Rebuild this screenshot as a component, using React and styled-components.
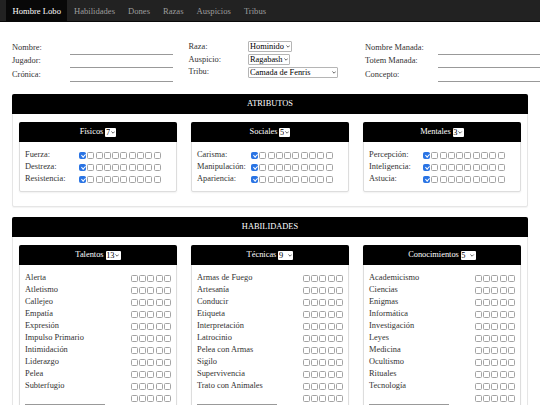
import React from 'react';
import styled, { createGlobalStyle } from 'styled-components';

const Global = createGlobalStyle`
  html, body { margin: 0; padding: 0; overflow: hidden; background: #fff; }
  body {
    font-family: "Liberation Serif", "Times New Roman", serif;
    font-size: 8.4px;
    line-height: 12px;
    color: #333;
  }
  * { box-sizing: border-box; }
`;

const Nav = styled.nav`
  height: 22px;
  background: #222;
  border-bottom: 1px solid #080808;
  display: flex;
  padding-left: 6px;
`;

const NavItem = styled.a`
  display: flex;
  align-items: center;
  padding: 0 6.5px;
  color: ${p => (p.$active ? '#fff' : '#9d9d9d')};
  background: ${p => (p.$active ? '#080808' : 'transparent')};
  text-decoration: none;
  font-size: 8.6px;
`;

const Form = styled.div`
  display: grid;
  grid-template-columns: 176.5px 176.5px 176.5px;
  padding: 19px 0 0 12px;
  width: 560px;
`;

const FieldCol = styled.div`
  display: grid;
  grid-template-columns: ${p => p.$label}px ${p => p.$field};
  align-content: start;
  align-items: center;
`;

const Label = styled.label`
  white-space: nowrap;
  color: #333;
`;

const LineInput = styled.input`
  height: 13.5px;
  width: 100%;
  border: none;
  border-bottom: 1px solid #999;
  outline: none;
  background: transparent;
  padding: 0;
  font: inherit;
`;

const SelWrap = styled.span`
  position: relative;
  display: inline-flex;
  margin-bottom: ${p => p.$mb || 0}px;
  justify-self: start;
`;

const Sel = styled.select`
  appearance: none;
  -webkit-appearance: none;
  font-family: "Liberation Serif", "Times New Roman", serif;
  font-size: 8.4px;
  line-height: ${p => p.$h - 2}px;
  height: ${p => p.$h}px;
  width: ${p => p.$w}px;
  padding: 0 6px 0 ${p => (p.$plain ? 0.5 : 1.5)}px;
  border: ${p => (p.$plain ? 'none' : '1px solid #b5b5b5')};
  border-radius: 1px;
  background: #fff;
  color: #000;
  outline: none;
`;

const Chev = styled.svg`
  position: absolute;
  right: 1.2px;
  top: 50%;
  width: 4.2px;
  height: 3px;
  margin-top: -1.2px;
  pointer-events: none;
`;

function Select({ w, h = 11, value, plain, mb }) {
  return (
    <SelWrap $mb={mb}>
      <Sel $w={w} $h={h} $plain={plain} defaultValue={value}>
        <option value={value}>{value}</option>
      </Sel>
      <Chev viewBox="0 0 6 4">
        <path d="M0.6 0.6 L3 3 L5.4 0.6" fill="none" stroke="#333" strokeWidth="1.1" />
      </Chev>
    </SelWrap>
  );
}

const Container = styled.main`
  margin: 12.5px 12px 0;
`;

const Panel = styled.section`
  border: 1px solid #e6e6e6;
  border-radius: 2px;
  box-shadow: 0 1px 1px rgba(0, 0, 0, 0.05);
  margin-bottom: 10px;
  background: #fff;
`;

const PanelHead = styled.div`
  background: #000;
  color: #fff;
  height: 20px;
  margin: -1px -1px 0;
  display: flex;
  align-items: center;
  justify-content: center;
  border-radius: 2px 2px 0 0;
`;

const PanelBody = styled.div`
  display: grid;
  grid-template-columns: repeat(3, 1fr);
  gap: 14px;
  padding: 8px 6px 2px;
`;

const Sub = styled.div`
  border: 1px solid #ddd;
  border-radius: 2px;
  box-shadow: 0 1px 2px rgba(0, 0, 0, 0.06);
  margin-bottom: 12px;
  background: #fff;
`;

const SubHead = styled.div`
  background: #000;
  color: #fff;
  height: 20px;
  margin: -1px -1px 0;
  display: flex;
  align-items: center;
  justify-content: center;
  gap: 2px;
  border-radius: 2px 2px 0 0;
`;

const SubBody = styled.div`
  padding: 7px 5px 6px;
`;

const Row = styled.div`
  display: flex;
  align-items: center;
  justify-content: ${p => (p.$spread ? 'space-between' : 'flex-start')};
  height: ${p => p.$h || 12}px;
`;

const RowLabel = styled.span`
  width: ${p => (p.$w ? `${p.$w}px` : 'auto')};
  flex: none;
  white-space: nowrap;
`;

const Dots = styled.span`
  display: flex;
  gap: 1.3px;
`;

const Check = styled.input`
  appearance: none;
  -webkit-appearance: none;
  margin: 0;
  width: 7px;
  height: 7px;
  border: 1px solid #a3a3a3;
  border-radius: 1.5px;
  background: #fff;
  position: relative;
  flex: none;
  &:checked {
    background: #2a74e4;
    border-color: #2a74e4;
  }
  &:checked::after {
    content: '';
    position: absolute;
    left: 1.6px;
    top: 0.2px;
    width: 1.6px;
    height: 3.2px;
    border: solid #fff;
    border-width: 0 1px 1px 0;
    transform: rotate(45deg);
  }
`;

const SmallLine = styled.input`
  width: 80px;
  height: 13px;
  border: none;
  border-bottom: 1px solid #999;
  outline: none;
  background: transparent;
  padding: 0;
  font: inherit;
`;

function Boxes({ n, first }) {
  return (
    <Dots>
      {Array.from({ length: n }).map((_, i) => (
        <Check key={i} type="checkbox" defaultChecked={first && i === 0} />
      ))}
    </Dots>
  );
}

const attrs = [
  { title: 'Físicos', val: '7', w: 11, items: ['Fuerza:', 'Destreza:', 'Resistencia:'] },
  { title: 'Sociales', val: '5', w: 11, items: ['Carisma:', 'Manipulación:', 'Apariencia:'] },
  { title: 'Mentales', val: '3', w: 11, items: ['Percepción:', 'Inteligencia:', 'Astucia:'] },
];

const skills = [
  {
    title: 'Talentos', val: '13', w: 15,
    items: ['Alerta', 'Atletismo', 'Callejeo', 'Empatía', 'Expresión', 'Impulso Primario', 'Intimidación', 'Liderazgo', 'Pelea', 'Subterfugio'],
  },
  {
    title: 'Técnicas', val: '9', w: 15,
    items: ['Armas de Fuego', 'Artesanía', 'Conducir', 'Etiqueta', 'Interpretación', 'Latrocinio', 'Pelea con Armas', 'Sigilo', 'Supervivencia', 'Trato con Animales'],
  },
  {
    title: 'Conocimientos', val: '5', w: 15,
    items: ['Academicismo', 'Ciencias', 'Enigmas', 'Informática', 'Investigación', 'Leyes', 'Medicina', 'Ocultismo', 'Rituales', 'Tecnología'],
  },
];

export default function App() {
  return (
    <>
      <Global />
      <Nav>
        <NavItem $active href="#">Hombre Lobo</NavItem>
        <NavItem href="#">Habilidades</NavItem>
        <NavItem href="#">Dones</NavItem>
        <NavItem href="#">Razas</NavItem>
        <NavItem href="#">Auspicios</NavItem>
        <NavItem href="#">Tribus</NavItem>
      </Nav>

      <Form>
        <FieldCol $label={58} $field="103px">
          <Label>Nombre:</Label><LineInput />
          <Label>Jugador:</Label><LineInput />
          <Label>Crónica:</Label><LineInput />
        </FieldCol>
        <FieldCol $label={59} $field="auto">
          <Label>Raza:</Label><Select w={44} value="Hominido" mb={1.5} />
          <Label>Auspicio:</Label><Select w={42} value="Ragabash" mb={1.5} />
          <Label>Tribu:</Label><Select w={90} value="Camada de Fenris" />
        </FieldCol>
        <FieldCol $label={73} $field="110px">
          <Label>Nombre Manada:</Label><LineInput />
          <Label>Totem Manada:</Label><LineInput />
          <Label>Concepto:</Label><LineInput />
        </FieldCol>
      </Form>

      <Container>
        <Panel>
          <PanelHead>ATRIBUTOS</PanelHead>
          <PanelBody>
            {attrs.map(g => (
              <Sub key={g.title}>
                <SubHead>
                  {g.title} <Select w={g.w} h={9} value={g.val} plain />
                </SubHead>
                <SubBody>
                  {g.items.map(it => (
                    <Row key={it}>
                      <RowLabel $w={54}>{it}</RowLabel>
                      <Boxes n={10} first />
                    </Row>
                  ))}
                </SubBody>
              </Sub>
            ))}
          </PanelBody>
        </Panel>

        <Panel>
          <PanelHead>HABILIDADES</PanelHead>
          <PanelBody>
            {skills.map(g => (
              <Sub key={g.title}>
                <SubHead>
                  {g.title} <Select w={g.w} h={9} value={g.val} plain />
                </SubHead>
                <SubBody>
                  {g.items.map(it => (
                    <Row key={it} $spread>
                      <RowLabel>{it}</RowLabel>
                      <Boxes n={5} />
                    </Row>
                  ))}
                  <Row $spread $h={13}>
                    <SmallLine />
                    <Boxes n={5} />
                  </Row>
                </SubBody>
              </Sub>
            ))}
          </PanelBody>
        </Panel>
      </Container>
    </>
  );
}
